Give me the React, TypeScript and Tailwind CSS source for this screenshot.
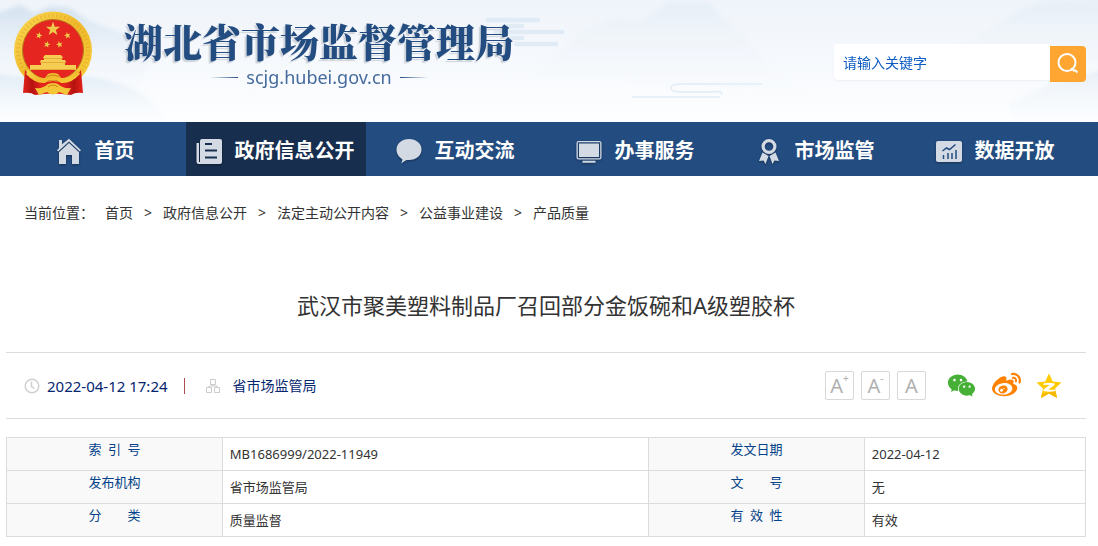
import type { ReactNode } from 'react';
import { AiFillWechat } from 'react-icons/ai';
import { FaWeibo } from 'react-icons/fa';

type NavItem = { label: string; icon: ReactNode; active?: boolean };

const STAR = 'M0 -10 L2.4 -3.2 L9.5 -3.1 L3.8 1.2 L5.9 8.1 L0 4 L-5.9 8.1 L-3.8 1.2 L-9.5 -3.1 L-2.4 -3.2 Z';

function NavIcon({ children }: { children: ReactNode }) {
  return (
    <svg viewBox="0 0 26 26" className="size-[26px] shrink-0 fill-[#d3dae4] stroke-none drop-shadow-[0_1px_1px_rgba(0,0,0,0.35)]" aria-hidden="true">
      {children}
    </svg>
  );
}

const NAV: NavItem[] = [
  {
    label: '首页',
    icon: (
      <NavIcon>
        <path d="M3 2h3v4.2L13 .8l12 11.4-1.2 1.4L13 3.6 2.2 13.6 1 12.2l2-1.9z" />
        <path d="M13 5 3 14.200V26h7v-9h6v9h7V14.200z" />
      </NavIcon>
    ),
  },
  {
    label: '政府信息公开',
    active: true,
    icon: (
      <NavIcon>
        <path d="M6 1h18a2 2 0 0 1 2 2v21a2 2 0 0 1-2 2H3a2.500 2.500 0 0 1-2.500-2.500V5H3v19h1V3a2 2 0 0 1 2-2z" />
        <path d="M9 6h7M9 12.500h12M9 19.500h12" className="stroke-[#172e4e]" strokeWidth="2" />
      </NavIcon>
    ),
  },
  {
    label: '互动交流',
    icon: (
      <NavIcon>
        <path d="M13 1c7 0 12.500 4.500 12.500 10.500S20 22 13 22c-1 0-2 0-3 .2L5 25.500c1-1.500 1.500-3 1.200-4.400C2.800 19 .5 15.500.5 11.500.5 5.500 6 1 13 1z" />
      </NavIcon>
    ),
  },
  {
    label: '办事服务',
    icon: (
      <NavIcon>
        <path d="M2.500 3h21a2 2 0 0 1 2 2v14.500a2 2 0 0 1-2 2h-21a2 2 0 0 1-2-2V5a2 2 0 0 1 2-2zM1.800 4.300v15.900h22.400V4.300z" fillRule="evenodd" />
        <path d="M3 5.500h20V19H3zM6.500 22.800h13v2h-13z" />
      </NavIcon>
    ),
  },
  {
    label: '市场监管',
    icon: (
      <NavIcon>
        <path d="M13 1a7.500 7.500 0 1 1 0 15 7.500 7.500 0 0 1 0-15zm0 3.200a4.300 4.300 0 1 0 0 8.600 4.300 4.300 0 0 0 0-8.600z" fillRule="evenodd" />
        <path d="m6.500 14.500 6 3.500-3 8-2-3.500-4.500.5zM19.500 14.500l-6 3.500 3 8 2-3.500 4.500.5z" />
      </NavIcon>
    ),
  },
  {
    label: '数据开放',
    icon: (
      <NavIcon>
        <rect x="0" y="3" width="26" height="21" rx="2" />
        <path d="M7.500 21v-4M12 21v-6M16 21v-6M20 21v-9" className="stroke-[#234c80]" strokeWidth="1.500" />
        <path d="m6.500 13 4-3 3 1.500 6-5" className="fill-none stroke-[#234c80]" strokeWidth="1.500" />
      </NavIcon>
    ),
  },
];

const CRUMBS = ['首页', '政府信息公开', '法定主动公开内容', '公益事业建设', '产品质量'];

const RECORD = [
  [{ label: '索 引 号', value: 'MB1686999/2022-11949' }, { label: '发文日期', value: '2022-04-12' }],
  [{ label: '发布机构', value: '省市场监管局' }, { label: '文 号', value: '无' }],
  [{ label: '分 类', value: '质量监督' }, { label: '有 效 性', value: '有效' }],
];

function Emblem() {
  return (
    <svg viewBox="0 0 80 86" className="h-[86px] w-20 shrink-0" role="img" aria-label="国徽">
      <defs>
        <linearGradient id="gold" x1="0" y1="0" x2="1" y2="1">
          <stop offset="0" stopColor="#fadb55" />
          <stop offset="0.5" stopColor="#f0b92c" />
          <stop offset="1" stopColor="#f8d03c" />
        </linearGradient>
        <linearGradient id="cloth" x1="0" y1="0" x2="1" y2="0">
          <stop offset="0" stopColor="#e3231c" />
          <stop offset="0.15" stopColor="#b5120f" />
          <stop offset="0.3" stopColor="#e3231c" />
          <stop offset="0.7" stopColor="#e3231c" />
          <stop offset="0.85" stopColor="#b5120f" />
          <stop offset="1" stopColor="#e3231c" />
        </linearGradient>
      </defs>
      <circle cx="40" cy="39.500" r="39" fill="url(#gold)" />
      <circle cx="40" cy="39.500" r="35" fill="none" stroke="#dfa321" strokeWidth="4" strokeDasharray="1 3" opacity=".6" />
      <circle cx="40" cy="39" r="30.500" fill="#e52620" stroke="#b9781a" />
      <g fill="#f0cb4a">
        <path d={STAR} transform="translate(40 18) scale(.74)" />
        <path d={STAR} transform="translate(26 24.500) rotate(15) scale(.36)" />
        <path d={STAR} transform="translate(54.500 24.500) rotate(-15) scale(.36)" />
        <path d={STAR} transform="translate(34 33.500) rotate(15) scale(.36)" />
        <path d={STAR} transform="translate(46.500 33.500) rotate(-15) scale(.36)" />
      </g>
      <path d="M32 44h16l2 2.500-1 1v1.500h3l1 2-1 1v2h11v5H17v-5h11v-2l-1-1 1-2h3v-1.500l-1-1z" fill="#f5cd52" />
      <path d="M28 51.500h24M31 47.500h18M18 58.500h44" stroke="#dd9d2c" strokeWidth=".7" />
      <path d="M12 59q10 14 28 11 18 3 28-11l2 23q-8-1-12 2-18-3-36 0-4-3-12-2z" fill="url(#cloth)" />
      <path d="M15 59q9 9 17 8l3-4q5-2 10 0l3 4q8 1 17-8l2 4q-9 10-19 9l-4-3q-4 1-8 0l-4 3q-10 1-19-9z" fill="url(#gold)" />
      <path d="M22 77q8 1 13-4 5-2 10 0 5 5 13 4l-4 7q-5-2-8-3-6 5-12 0-3 1-8 3z" fill="#f3c637" />
      <path d="M34 66q6-4 12 0M35 76q5-4 10 0" fill="none" stroke="#c98518" />
    </svg>
  );
}

function Scenery() {
  return (
    <svg viewBox="0 0 1098 122" preserveAspectRatio="none" className="absolute inset-0 size-full" aria-hidden="true">
      <defs>
        <linearGradient id="sky" x1="0" y1="0" x2="0" y2="1">
          <stop offset="0" stopColor="#eff4fa" />
          <stop offset="1" stopColor="#fdfeff" />
        </linearGradient>
        <linearGradient id="peak" x1="0" y1="0" x2="0" y2="1">
          <stop offset="0" stopColor="#d3e1ef" />
          <stop offset="1" stopColor="#f3f8fd" stopOpacity="0.1" />
        </linearGradient>
        <linearGradient id="haze" x1="0" y1="0" x2="0" y2="1">
          <stop offset="0" stopColor="#e1ebf5" />
          <stop offset="1" stopColor="#f8fbfe" stopOpacity="0.1" />
        </linearGradient>
        <filter id="soft">
          <feGaussianBlur stdDeviation="2" />
        </filter>
      </defs>
      <rect width="1098" height="122" fill="url(#sky)" />
      <g filter="url(#soft)">
        <path d="M-5 14 20 5l14 8 16-7 20 2 20 13 28 10 40 16-20 40H-5z" fill="url(#peak)" />
        <path d="M-5 74q30 4 65 2 50-2 85 20l30 26H-5z" fill="url(#haze)" />
        <path d="m530 75 35-27 20-18 30-11 24 2 30-18h40l30 30 60 60z" fill="url(#haze)" opacity=".6" />
        <path d="m930 60 60-30 30-20 24-8 60-2v90z" fill="url(#haze)" opacity=".6" />
        <path d="m1010 104 40-20 54-14v58h-94z" fill="url(#haze)" opacity=".7" />
      </g>
      <path d="M488 20h50M508 26h14M496 32h66M512 38h10M516 44h40" stroke="#e0ebf6" strokeLinecap="round" strokeWidth="4.500" />
      <path d="M632 97h88M762 84h-80q-11 0-11 4t11 4h30q10-2 10 3" fill="none" stroke="#e2edf6" strokeWidth="1.500" />
    </svg>
  );
}

function FontButton({ mark, label }: { mark?: string; label: string }) {
  return (
    <button type="button" aria-label={label} className="flex size-[29px] items-center justify-center rounded-xs border border-[#d8d8d8] text-xl leading-none text-[#b0b0b0]">
      A{mark && <sup className="-top-2 text-[10px]">{mark}</sup>}
    </button>
  );
}

function QzoneIcon() {
  return (
    <svg viewBox="0 0 26 26" className="size-[26px]" aria-hidden="true">
      <path d="m13 .5 3.800 8 8.700 1-6.500 6 2 9.500-8-4.500L5 25l2-9.500-6.500-6 8.700-1z" fill="#ffcb00" />
      <path d="m19 15.500 2 9.500-8-4.500L5 25l1-5q8 1 13-4.500z" fill="#f9b800" />
      <path d="M7.500 10.500q5-1.500 11 0V12l-6 4.500q3 .6 7 0V18q-6 1.500-12 0v-1.500l6-4.600q-3-.4-6 0z" fill="#fff" />
    </svg>
  );
}

export default function App() {
  return (
    <div className="bg-white font-['Noto_Sans','Noto_Sans_CJK_SC',sans-serif] text-sm text-[#333]">
      <header className="relative">
        <Scenery />
        <div className="relative flex h-[122px] items-start justify-between pr-3 pl-[13px]">
          <div className="flex pt-[11px]">
            <Emblem />
            <div className="ml-[31px] pt-1.5 text-[#234c80]">
              <h1 className="font-['Noto_Serif_CJK_SC','Noto_Sans_CJK_SC',serif] text-[39px] leading-[46px] font-black text-shadow-[-2px_2px_1px_#cdd3da]">湖北省市场监督管理局</h1>
              <div className="flex items-center justify-center gap-2 pt-0.5 text-lg leading-6 text-[#456a9c]">
                <span className="h-px w-7 bg-linear-to-l from-[#234c80] to-transparent" />
                <span>scjg.hubei.gov.cn</span>
                <span className="h-px w-7 bg-linear-to-r from-[#234c80] to-transparent" />
              </div>
            </div>
          </div>
          <form className="flex items-start pt-11" onSubmit={(e) => e.preventDefault()}>
            <input type="text" aria-label="搜索" placeholder="请输入关键字" className="h-9 w-[216px] rounded-l-sm bg-white px-[9px] shadow-xs outline-none placeholder:text-[#0a5bc4]" />
            <button type="submit" aria-label="搜索" className="mt-0.5 flex size-9 items-center justify-center rounded-r-sm bg-[#ffa632]">
              <svg viewBox="0 0 22 22" className="size-[22px] fill-none stroke-white stroke-2" aria-hidden="true">
                <circle cx="10" cy="9.500" r="8.500" />
                <path d="m14.500 15 2 2.500h2l2 2" />
              </svg>
            </button>
          </form>
        </div>
      </header>

      <nav className="bg-[#234c80] pr-3 pl-1.5">
        <ul className="grid grid-cols-6">
          {NAV.map((item) => (
            <li key={item.label}>
              <a href="#" className={`flex h-[54px] items-center justify-center gap-[13px] pt-1 pr-0.5 text-xl font-bold text-white ${item.active ? 'bg-[#172e4e]' : ''}`}>
                {item.icon}
                <span>{item.label}</span>
              </a>
            </li>
          ))}
        </ul>
      </nav>

      <main className="pr-3 pl-1.5">
        <div className="flex items-center px-[18px] pt-[27px] leading-5">
          <span className="mr-[11px]">当前位置：</span>
          {CRUMBS.map((crumb, i) => (
            <span key={crumb} className="flex">
              {i > 0 && <span className="px-[11px]">&gt;</span>}
              <a href="#">{crumb}</a>
            </span>
          ))}
        </div>

        <h2 className="pt-[66px] pb-[31px] text-center text-[22px] leading-8">武汉市聚美塑料制品厂召回部分金饭碗和A级塑胶杯</h2>

        <div className="flex h-[67px] items-center justify-between border-y border-[#dcdcdc] pr-6 pl-[18px]">
          <div className="flex items-center pt-0.5 text-[#04266f]">
            <svg viewBox="0 0 16 16" className="mr-[7px] size-4 fill-none stroke-[#d0d0d0] stroke-[1.500]" aria-hidden="true">
              <circle cx="8" cy="8" r="6.800" />
              <path d="M7.500 3.500v5l3 2" />
            </svg>
            <time className="text-[15px]">2022-04-12 17:24</time>
            <span className="mr-5 ml-4 h-4 w-px bg-[#ac4c52]" />
            <svg viewBox="0 0 16 16" className="mr-3 size-4 fill-none stroke-[#cccccc]" aria-hidden="true">
              <path d="M5.500 1.500h5v5h-5zM1.500 9.500h5v5h-5zM9.500 9.500h5v5h-5zM8 6.500V8M4 9.500V8h8v1.500" />
            </svg>
            <span>省市场监管局</span>
          </div>
          <div className="flex items-center">
            <div className="flex gap-[7px]">
              <FontButton mark="+" label="放大字体" />
              <FontButton mark="-" label="缩小字体" />
              <FontButton label="默认字体" />
            </div>
            <div className="ml-5 flex items-center gap-[15px]">
              <a href="#" aria-label="微信"><AiFillWechat className="size-[31px] text-[#45b035]" /></a>
              <a href="#" aria-label="微博"><FaWeibo className="size-[29px] text-[#ff8200]" /></a>
              <a href="#" aria-label="QQ空间"><QzoneIcon /></a>
            </div>
          </div>
        </div>

        <table className="mt-[18px] w-full table-fixed border-collapse text-[13px]">
          <colgroup>
            <col className="w-[20%]" />
            <col className="w-[39.500%]" />
            <col className="w-[20%]" />
            <col />
          </colgroup>
          <tbody>
            {RECORD.map((row, i) => (
              <tr key={i}>
                {row.map(({ label, value }) => [
                  <th key={label} scope="row" className="border border-[#dcdcdc] bg-[#f9f9f9] pt-px pb-[11px] align-top font-normal text-[#044389]">
                    <span className="mx-auto block w-[52px] leading-5 [text-align-last:justify]">{label}</span>
                  </th>,
                  <td key={`${label}-value`} className="border border-[#dcdcdc] px-[7px] leading-5">{value}</td>,
                ])}
              </tr>
            ))}
          </tbody>
        </table>
      </main>
    </div>
  );
}
